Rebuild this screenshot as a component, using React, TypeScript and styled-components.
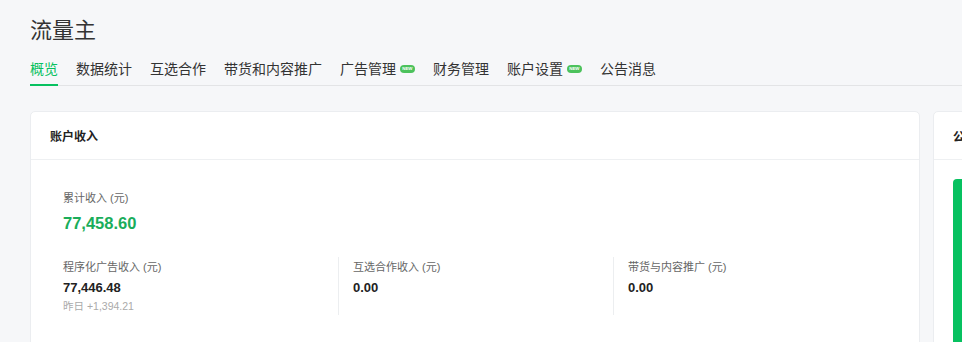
import styled, { createGlobalStyle } from 'styled-components';

const GlobalStyle = createGlobalStyle`
    html, body {
        margin: 0;
        padding: 0;
        background: #f6f7f9;
        overflow: hidden;
    }
    body {
        font-family: "Liberation Sans", "Noto Sans CJK SC", sans-serif;
        color: #1f1f1f;
    }
`;

const Page = styled.div`
    width: 962px;
    height: 342px;
    padding: 16px 0 0 30px;
    box-sizing: border-box;
    overflow: hidden;
`;

const Title = styled.h1`
    margin: 0;
    font-size: 22px;
    line-height: 30px;
    font-weight: normal;
    color: #333;
`;

const Nav = styled.nav`
    display: flex;
    gap: 18px;
    margin-top: 12px;
    border-bottom: 1px solid #e3e4e6;
`;

const Tab = styled.div<{ $active?: boolean }>`
    display: flex;
    align-items: center;
    gap: 4px;
    font-size: 14px;
    line-height: 22px;
    padding-bottom: 4px;
    color: ${p => p.$active ? '#07c160' : '#333'};
    border-bottom: 2px solid ${p => p.$active ? '#07c160' : 'transparent'};
    margin-bottom: -1px;
`;

const Badge = styled.span`
    display: inline-flex;
    align-items: center;
    justify-content: center;
    width: 15px;
    height: 8px;
    border-radius: 4px;
    background: #4cc25c;
    color: #fff;
    font-size: 8px;
    line-height: 8px;
    font-weight: bold;
    span {
        transform: scale(0.55);
    }
`;

const Cards = styled.div`
    display: flex;
    gap: 13px;
    margin-top: 25px;
`;

const Card = styled.section<{ $width: number }>`
    flex: 0 0 ${p => p.$width}px;
    height: 260px;
    background: #fff;
    border: 1px solid #ebedf0;
    border-radius: 5px;
    box-sizing: border-box;
    overflow: hidden;
`;

const CardHead = styled.div`
    height: 47px;
    display: flex;
    align-items: center;
    padding-left: 19px;
    border-bottom: 1px solid #eef0f2;
    font-size: 12px;
    font-weight: bold;
    color: #222;
    white-space: nowrap;
`;

const CardBody = styled.div`
    padding: 29px 0 0 32px;
`;

const Label = styled.div`
    font-size: 11px;
    line-height: 18px;
    color: #666;
`;

const Total = styled.div`
    margin-top: 4px;
    font-size: 16.5px;
    line-height: 24px;
    font-weight: bold;
    color: #1aad5a;
`;

const Columns = styled.div`
    display: flex;
    margin-top: 22px;
`;

const Column = styled.div<{ $first?: boolean }>`
    width: 275px;
    height: 58px;
    box-sizing: border-box;
    padding: 1px 0 0 ${p => p.$first ? 0 : 14}px;
    border-left: ${p => p.$first ? 'none' : '1px solid #eceef0'};
`;

const Value = styled.div`
    margin-top: 3px;
    font-size: 13px;
    line-height: 18px;
    font-weight: bold;
    color: #222;
`;

const Sub = styled.div`
    font-size: 10.5px;
    line-height: 18px;
    color: #aaa;
`;

const Notice = styled.div`
    margin: 19px 0 0 19px;
    height: 200px;
    background: #07c160;
    border-radius: 4px 0 0 0;
`;

const tabs = [
    { name: '概览', active: true },
    { name: '数据统计' },
    { name: '互选合作' },
    { name: '带货和内容推广' },
    { name: '广告管理', badge: true },
    { name: '财务管理' },
    { name: '账户设置', badge: true },
    { name: '公告消息' },
];

const columns = [
    { label: '程序化广告收入 (元)', value: '77,446.48', sub: '昨日 +1,394.21' },
    { label: '互选合作收入 (元)', value: '0.00' },
    { label: '带货与内容推广 (元)', value: '0.00' },
];

export default function App() {
    return <Page>
        <GlobalStyle />
        <Title>流量主</Title>
        <Nav>
            {tabs.map(t => <Tab key={t.name} $active={t.active}>
                {t.name}
                {t.badge && <Badge><span>NEW</span></Badge>}
            </Tab>)}
        </Nav>
        <Cards>
            <Card $width={890}>
                <CardHead>账户收入</CardHead>
                <CardBody>
                    <Label>累计收入 (元)</Label>
                    <Total>77,458.60</Total>
                    <Columns>
                        {columns.map((c, i) => <Column key={c.label} $first={i === 0}>
                            <Label>{c.label}</Label>
                            <Value>{c.value}</Value>
                            {c.sub && <Sub>{c.sub}</Sub>}
                        </Column>)}
                    </Columns>
                </CardBody>
            </Card>
            <Card $width={300}>
                <CardHead>公告</CardHead>
                <Notice />
            </Card>
        </Cards>
    </Page>
}
